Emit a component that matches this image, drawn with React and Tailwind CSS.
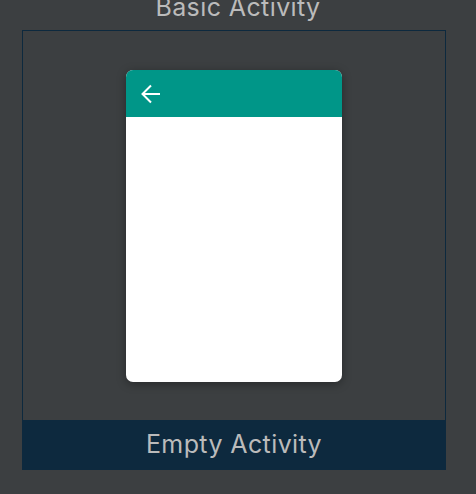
import React from 'react';

const BackArrow = () => (
    <svg width="20" height="20" viewBox="0 0 20 20" fill="none" stroke="white" strokeWidth="2" strokeLinecap="butt" strokeLinejoin="miter">
        <path d="M19 10H2" />
        <path d="M10 1.5 1.5 10 10 18.5" />
    </svg>
);

const App = () => {
    return (
        <div className="w-[476px] h-[494px] bg-[#3c3f41] overflow-hidden font-['Inter',sans-serif] text-[#bbbbbb]">
            <div className="mt-[-8px] mb-[8px] h-[30px] leading-[30px] text-[25px] text-center tracking-[0.4px]">
                Basic Activity
            </div>

            <div className="ml-[22px] w-[424px] h-[440px] border border-[#0d293e] flex flex-col">
                <div className="flex-1 flex justify-center pt-[39px]">
                    <div className="w-[216px] h-[312px] bg-white rounded-[7px] overflow-hidden shadow-[0_2px_10px_rgba(0,0,0,0.35)]">
                        <div className="h-[47px] bg-[#009688] flex items-center pl-[15px]">
                            <BackArrow />
                        </div>
                    </div>
                </div>
                <div className="h-[49px] bg-[#0d293e] flex items-center justify-center text-[25px] tracking-[0.4px]">
                    Empty Activity
                </div>
            </div>
        </div>
    );
};

export default App;
